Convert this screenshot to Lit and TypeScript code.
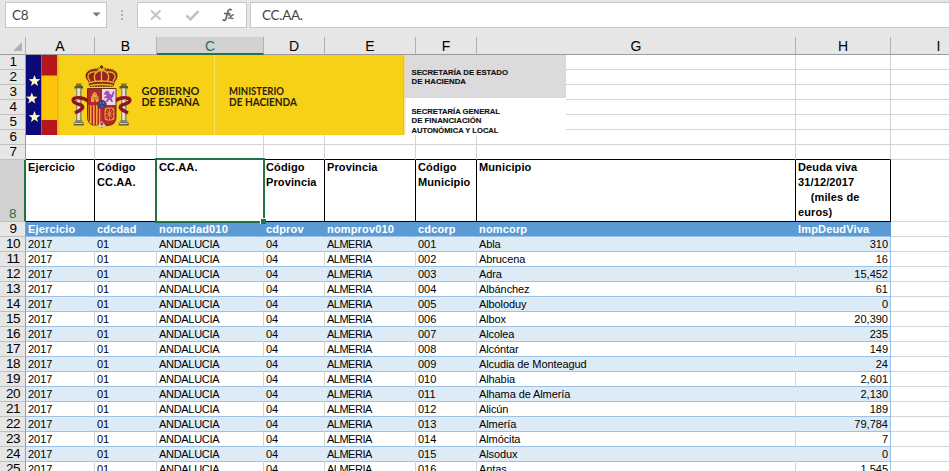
import { LitElement, html, svg, css } from 'lit';
import { customElement } from 'lit/decorators.js';
import { classMap } from 'lit/directives/class-map.js';

const COLUMNS = ['A', 'B', 'C', 'D', 'E', 'F', 'G', 'H', 'I'];
const TITLES = ['Ejercicio', 'Código\nCC.AA.', 'CC.AA.', 'Código\nProvincia', 'Provincia', 'Código\nMunicipio', 'Municipio', 'Deuda viva\n31/12/2017\n    (miles de\neuros)'];
const FIELDS = ['Ejercicio', 'cdcdad', 'nomcdad010', 'cdprov', 'nomprov010', 'cdcorp', 'nomcorp', 'ImpDeudViva'];
const TOWNS: [string, string][] = [
  ['Abla', '310'], ['Abrucena', '16'], ['Adra', '15,452'], ['Albánchez', '61'],
  ['Alboloduy', '0'], ['Albox', '20,390'], ['Alcolea', '235'], ['Alcóntar', '149'],
  ['Alcudia de Monteagud', '24'], ['Alhabia', '2,601'], ['Alhama de Almería', '2,130'],
  ['Alicún', '189'], ['Almería', '79,784'], ['Almócita', '7'], ['Alsodux', '0'], ['Antas', '1,545'],
];

@customElement('ministry-banner')
class MinistryBanner extends LitElement {
  static styles = css`
    :host { display: block; width: 540px; height: 80px; }
    svg { display: block; }
    .gov { font: 700 10.8px Lato, sans-serif; fill: #26220c; }
    .dept { font: 700 8px "Liberation Sans", Arial, sans-serif; fill: #111; stroke: #111; stroke-width: .15; }
  `;

  star(x: number, y: number) {
    return svg`<path transform="translate(${x} ${y})" fill="#fffbc8"
      d="M0-6 1.5-1.9 5.8-1.8 2.4.9 3.6 5 0 2.6-3.6 5-2.4.9-5.8-1.8-1.5-1.9Z"/>`;
  }

  pillar(x: number) {
    return svg`<g transform="translate(${x} 0)">
      <path d="M1.5 83.5h5.5v3h-5.5z" fill="#9a6a16"/>
      <path d="M0 86h8.5v2.6H0z" fill="#5d5a2a"/>
      <path d="M1.500 88.500h5.600v32H1.500z" fill="#8e8c76"/>
      <path d="M2.800 88.500h2.600v32H2.800z" fill="#e9e6cd"/>
      <path d="M.8 120h7v3H.8z" fill="#8c8a62"/>
      <path d="M-.8 122.500h10v3h-10z" fill="#54635a"/>
      <path d="M0 123h8v1H0z" fill="#c9d0c4"/></g>`;
  }

  crest() {
    return svg`
      ${this.pillar(74.5)}${this.pillar(119.5)}
      <g fill="none" stroke="#8e1420" stroke-width="3.400">
        <path d="M88 101c-5-4-9-4-14-2.500c-3 3 2 5 7 6.500c5 3-2 6-6 8"/>
        <path d="M115 101c5-4 9-4 14-2.500c3 3-2 5-7 6.500c-5 3 2 6 6 8"/>
      </g>
      <path d="M76 99.500l4 1M122 100.500l4-1" stroke="#e6b9a0" stroke-width=".8"/>
      <path d="M88 81C81 73 91 67 101.500 70 112 67 122 73 115.500 81L113 86H90Z" fill="#93251e"/>
      <g fill="none" stroke="#e9b62a" stroke-width="1.300">
        <path d="M90 81C85 75 90 71 96 72M113 81c5-6 0-10-6-9M96 82c-4-7 0-11 5.500-12M107 82c4-7 0-11-5.500-12M101.500 70v12"/>
        <path d="M89 82.500q12.500-3 25 0M90 85.500q12-2 23 0"/>
      </g>
      <path d="M87 77c-2-5 3-8 9-8l5-2 6 2c7 0 12 3 9 8M89 84l1 2.500h23l1-2.500" fill="none" stroke="#49250d" stroke-width=".9" stroke-dasharray="1.800 .8"/>
      <path d="M101.500 65v4M99.900 66.500h3.200" stroke="#5a3512" stroke-width="1.200"/>
      <path d="M87.500 88.500h28.500v28c0 6-3 9-9 9-3 0-4.500 1-5.200 2-.8-1-2.300-2-5.300-2-6 0-9-3-9-9Z" fill="#b3262c" stroke="#6a2019" stroke-width=".9"/>
      <path d="M102 89h13.500v16H102z" fill="#eadbea"/>
      <path d="M91 102v-6l1.300 1v-3.500h1.500V92h1.700v1.500H97v3.500l1.500-1v6h-2.800v-2.500h-1.500v2.500Z" fill="#e8ad36"/>
      <path d="M92.500 98h5M94.500 94.500h1" stroke="#7e301b" stroke-width=".7"/>
      <path d="M105 92l2-1.500 2 1 .5 2 2 1.500 1.500-4 1.500 1-1.500 5-1.500 1 1.500 4h-1.500l-2-2.500-2 2.500h-2l2-4-3 .5-.5-1.500 2.500-1-.5-1.500-2.500.5Z" fill="#a64bb1"/>
      <path d="M88 105h13.500v20.500H96c-5.500-.5-8-3-8-9Z" fill="#efb52b"/>
      <path d="M89.300 105v16M92.300 105v20M95.300 105v20M98.300 105v20M101 105v21" stroke="#b3222c" stroke-width="1.500"/>
      <rect x="105" y="108" width="9" height="12" rx="3" fill="none" stroke="#dfa035" stroke-width="1.100"/>
      <path d="M105 108l9 12M114 108l-9 12M109.500 108v12M105 114h9" stroke="#dfa035" stroke-width=".8"/>
      <path d="M97.500 126l4.300-5 4.300 5-4.300 1.500Z" fill="#ddd1b0"/>
      <circle cx="101.800" cy="124" r="1.400" fill="#9a3b22"/>
      <circle cx="101.900" cy="104.500" r="4.400" fill="#2d4388" stroke="#a52a2f" stroke-width=".9"/>
      <path d="M100 103h1M103 103h1M101.500 106.500h1" stroke="#c2bf9b" stroke-width="1"/>`;
  }

  render() {
    return html`<svg width="540" height="80" viewBox="26 55 540 80">
      <path d="M26 55h540v80H26z" fill="#fff"/>
      <path d="M404 55h162v43H404z" fill="#dcdadd"/>
      <path d="M26 55h378v80H26z" fill="#f7d117"/>
      <path d="M403 55h1.500v80H403z" fill="#e8bd20"/>
      <path d="M404.500 55h1v80h-1z" fill="#f0e3b0"/>
      <path d="M214 55h1v80h-1z" fill="#fbe05c"/>
      <path d="M26 55h15.500v80H26z" fill="#0a0b78"/>
      <path d="M41.500 55H57v80H41.500z" fill="#fcc40b"/>
      <path d="M41.500 55H57v20.500H41.500zM41.500 120H57v15H41.500z" fill="#b5161c"/>
      <path d="M57 55h1.500v80H57z" fill="#e9b41a"/>
      ${this.star(34.5, 81)}${this.star(31.8, 98.5)}${this.star(34.5, 117)}
      ${this.crest()}
      <text class="gov" x="141.500" y="94.800" textLength="58" lengthAdjust="spacingAndGlyphs">GOBIERNO</text>
      <text class="gov" x="141.500" y="106" textLength="58" lengthAdjust="spacingAndGlyphs">DE ESPAÑA</text>
      <text class="gov" x="229" y="94.800" textLength="55" lengthAdjust="spacingAndGlyphs">MINISTERIO</text>
      <text class="gov" x="229" y="106" textLength="68" lengthAdjust="spacingAndGlyphs">DE HACIENDA</text>
      <text class="dept" x="411.500" y="74.500" textLength="96.500" lengthAdjust="spacingAndGlyphs">SECRETARÍA DE ESTADO</text>
      <text class="dept" x="411.500" y="84" textLength="54.500" lengthAdjust="spacingAndGlyphs">DE HACIENDA</text>
      <text class="dept" x="411.500" y="113.500" textLength="88.500" lengthAdjust="spacingAndGlyphs">SECRETARÍA GENERAL</text>
      <text class="dept" x="411.500" y="123" textLength="70" lengthAdjust="spacingAndGlyphs">DE FINANCIACIÓN</text>
      <text class="dept" x="411.500" y="132.500" textLength="87" lengthAdjust="spacingAndGlyphs">AUTONÓMICA Y LOCAL</text>
    </svg>`;
  }
}

@customElement('formula-bar')
class FormulaBar extends LitElement {
  static styles = css`
    :host { display: flex; height: 37px; padding: 2px 0 0 5px; box-sizing: border-box; background: #e6e6e6;
      font: 13.5px Lato, "Open Sans", sans-serif; letter-spacing: -.3px; color: #444; }
    .box { height: 26px; box-sizing: border-box; background: #fff; border: 1px solid #c6c6c6; display: flex; align-items: center; }
    .name { width: 102px; justify-content: space-between; padding: 0 5px 0 6px; }
    .dots { width: 30px; display: flex; }
    .tools { width: 110px; }
    .input { flex: 1; margin-left: 3px; padding-left: 11px; border-right: 0; }
    svg { display: block; }
  `;

  render() {
    return html`
      <div class="box name"><span>C8</span>
        <svg width="9" height="6" viewBox="0 0 9 6"><path d="M.5 .5h8L4.500 4.500z" fill="#777"/></svg></div>
      <div class="dots"><svg width="30" height="26"><path d="M14 8h2v2h-2zM14 12h2v2h-2zM14 16h2v2h-2z" fill="#b0b0b0"/></svg></div>
      <div class="box tools"><svg width="108" height="24" viewBox="138 3 108 24">
        <path d="M151 10.500l9.500 9M160.500 10.500l-9.500 9" stroke="#c3c3c3" stroke-width="2"/>
        <path d="M186.500 15.500l4 4 8-8.500" fill="none" stroke="#c3c3c3" stroke-width="2.600"/>
        <path d="M231.800 10c-2.600-1.400-3.800 0-4.300 2.700l-1.300 5.300c-.5 2.300-1.800 2.800-3.700 1.800M224 13.500h6.500" fill="none" stroke="#666" stroke-width="1.700"/>
        <path d="M228 15q1.500-.8 2.200 1l.8 1.900q.5 1.200 2.300.2M233.800 14.800q-1.500-.3-2.700 1.600-1.300 2.100-3.200 2" fill="none" stroke="#666" stroke-width="1.300"/>
      </svg></div>
      <div class="box input">CC.AA.</div>`;
  }
}

@customElement('app-root')
class AppRoot extends LitElement {
  static styles = css`
    :host { display: block; position: relative; width: 949px; height: 471px; overflow: hidden; background: #fff;
      font: 11px "Liberation Sans", Arial, sans-serif; color: #000; }
    .row { display: grid; grid-template-columns: 26px 69px 62px 107px 61px 91px 61px 319px 95px 96px; height: 15px; width: 987px; }
    .cell { box-sizing: border-box; border-right: 1px solid #d4d4d4; border-bottom: 1px solid #d4d4d4;
      padding: 0 2px; line-height: 14px; white-space: pre; overflow: hidden; }
    .num { box-sizing: border-box; background: #e6e6e6; border-right: 1px solid #9b9b9b; border-bottom: 1px solid #c0c0c0;
      font-size: 13.5px; line-height: 14px; letter-spacing: -.4px; display: flex; align-items: flex-end; justify-content: center; padding-left: 1px; }
    .heads { height: 18px; background: #e6e6e6; }
    .letter { box-sizing: border-box; height: 18px; padding-top: 1px; border-right: 1px solid #b1b1b1; border-bottom: 1px solid #9b9b9b;
      font-size: 14px; line-height: 16px; text-align: center; }
    .letter.active { background: #d2d2d2; color: #217346; border-bottom: 2px solid #217346; }
    .corner { box-sizing: border-box; height: 18px; border-right: 1px solid #b1b1b1; border-bottom: 1px solid #9b9b9b; }
    .corner svg { display: block; }
    .titles { height: 62px; font-weight: 700; }
    .titles .cell { line-height: 15px; border-color: #000; letter-spacing: .12px; }
    .titles .cell.free { border-color: #d4d4d4; }
    .titles .num { background: #d2d2d2; color: #217346; border-right: 2px solid #217346; font-weight: 400; }
    .above .cell { border-bottom-color: #000; }
    .above .cell.free { border-bottom-color: #d4d4d4; }
    .fields .cell:not(.free) { background: #5b9bd5; border-color: #5b9bd5; border-bottom-color: #9bc2e6; color: #fff; font-weight: 700; letter-spacing: .17px; }
    .data .cell:not(.free) { border-bottom-color: #9bc2e6; }
    .data .cell.last { text-align: right; border-right-color: #9bc2e6; }
    .data.band .cell:not(.free) { background: #ddebf7; border-right-color: #ddebf7; }
    .data.band .cell.last { border-right-color: #9bc2e6; }
    .data .region { letter-spacing: -.3px; }
    .data .province { letter-spacing: -.5px; }
    .data .town { letter-spacing: -.1px; }
    ministry-banner { position: absolute; left: 26px; top: 55px; }
    .selection { position: absolute; left: 155px; top: 158px; width: 110px; height: 65px; box-sizing: border-box; border: 2px solid #217346; }
    .handle { position: absolute; right: -3px; bottom: -3px; width: 6px; height: 6px; box-sizing: border-box; background: #217346; border: solid #fff; border-width: 1px 0 0 1px; }
  `;

  cells(values: string[]) {
    return COLUMNS.map((_, i) => html`<div class=${classMap({
      cell: true, free: i === 8, last: i === 7, region: i === 2, province: i === 4, town: i === 6,
    })}>${values[i] ?? ''}</div>`);
  }

  render() {
    return html`
      <formula-bar></formula-bar>
      <div class="row heads">
        <div class="corner"><svg width="25" height="17"><path d="M22 5v9h-9z" fill="#b1b1b1"/></svg></div>
        ${COLUMNS.map(c => html`<div class=${classMap({ letter: true, active: c === 'C' })}>${c}</div>`)}
      </div>
      ${[1, 2, 3, 4, 5, 6, 7].map(n => html`<div class=${classMap({ row: true, above: n === 7 })}>
        <div class="num">${n}</div>${this.cells([])}</div>`)}
      <div class="row titles"><div class="num">8</div>${this.cells(TITLES)}</div>
      <div class="row fields"><div class="num">9</div>${this.cells(FIELDS)}</div>
      ${TOWNS.map(([town, debt], i) => html`<div class=${classMap({ row: true, data: true, band: i % 2 === 0 })}>
        <div class="num">${i + 10}</div>
        ${this.cells(['2017', '01', 'ANDALUCIA', '04', 'ALMERIA', String(i + 1).padStart(3, '0'), town, debt])}</div>`)}
      <ministry-banner></ministry-banner>
      <div class="selection"><div class="handle"></div></div>`;
  }
}
